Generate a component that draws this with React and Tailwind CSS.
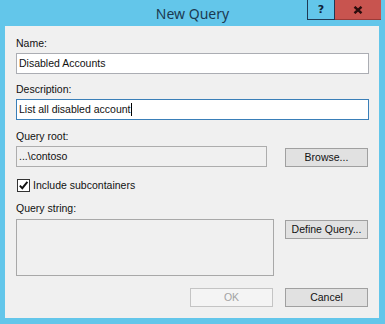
import React from "react";

const font = "font-['Liberation_Sans',Arial,sans-serif]";

function Btn({ children, disabled, className = "" }) {
  return (
    <div
      className={`w-[83px] h-[19px] flex items-center justify-center text-[10.5px] leading-[13px] border ${
        disabled
          ? "border-[#c4c4c4] bg-[#f4f4f4] text-[#a3a3a3]"
          : "border-[#a0a0a0] bg-[#e1e1e1] text-[#111]"
      } ${className}`}
    >
      {children}
    </div>
  );
}

function Label({ children, className = "" }) {
  return (
    <div className={`h-[13px] leading-[13px] text-[10.5px] text-[#111] ${className}`}>
      {children}
    </div>
  );
}

export default function App() {
  return (
    <div className={`w-[385px] h-[324px] bg-[#63c6ea] flex flex-col ${font}`}>
      <div className="relative h-[26px] flex items-center justify-center">
        <span className="font-['Noto_Sans',sans-serif] text-[14px] leading-[16px] text-[#1b3a52] mt-[1px]">
          New Query
        </span>
        <div className="absolute top-0 right-[4px] flex">
          <div className="w-[28px] h-[20px] border border-t-0 border-[#1f3a55] bg-[#63c6ea] flex items-center justify-center">
            <span className="font-['DejaVu_Sans',sans-serif] font-bold text-[11px] leading-[11px] text-[#0f2036]">
              ?
            </span>
          </div>
          <div className="w-[46px] h-[20px] bg-[#c8544f] border-b border-[#9a3b38] flex items-center justify-center">
            <svg width="10" height="8" viewBox="0 0 10 8">
              <path d="M1.5 0.8 L8.5 7.2 M8.5 0.8 L1.5 7.2" stroke="#2a0c0c" strokeWidth="2.4" strokeLinecap="butt" />
            </svg>
          </div>
        </div>
      </div>
      <div className="ml-[5px] mr-[6px] h-[292px] bg-[#f0f0f0] flex flex-col pl-[11px] pt-[11px]">
        <Label>Name:</Label>
        <div className="mt-[3px] w-[353px] h-[21px] border border-[#abadb3] bg-white flex items-center px-[2px] text-[10.5px] text-[#111]">
          Disabled Accounts
        </div>
        <Label className="mt-[9px]">Description:</Label>
        <div className="mt-[3px] w-[353px] h-[21px] border border-[#3a7fb8] bg-white flex items-center px-[2px] text-[10.5px] text-[#111]">
          List all disabled account
          <span className="inline-block w-[1px] h-[13px] bg-black" />
        </div>
        <Label className="mt-[10px]">Query root:</Label>
        <div className="mt-[3px] flex items-start">
          <div className="w-[251px] h-[21px] border border-[#adadad] bg-[#f0f0f0] flex items-center px-[2px] text-[10.5px] text-[#111]">
            ...\contoso
          </div>
          <Btn className="ml-[18px] mt-[2px]">Browse...</Btn>
        </div>
        <div className="mt-[12px] h-[13px] flex items-center">
          <div className="ml-[1px] w-[13px] h-[13px] border border-[#333] bg-white flex items-center justify-center">
            <svg width="11" height="11" viewBox="0 0 11 11">
              <path d="M1.8 5.6 L4.3 8.2 L9.4 1.8" fill="none" stroke="#111" strokeWidth="1.9" />
            </svg>
          </div>
          <span className="ml-[3px] text-[10.5px] leading-[13px] text-[#111]">Include subcontainers</span>
        </div>
        <Label className="mt-[10px]">Query string:</Label>
        <div className="mt-[4px] flex items-start">
          <div className="w-[258px] h-[57px] border border-[#a8a8a8] bg-[#f0f0f0]" />
          <Btn className="ml-[11px] mt-[1px]">Define Query...</Btn>
        </div>
        <div className="mt-[12px] w-[352px] flex justify-end gap-[12px]">
          <Btn disabled>OK</Btn>
          <Btn className="border-[#8a8a8a]">Cancel</Btn>
        </div>
      </div>
    </div>
  );
}
